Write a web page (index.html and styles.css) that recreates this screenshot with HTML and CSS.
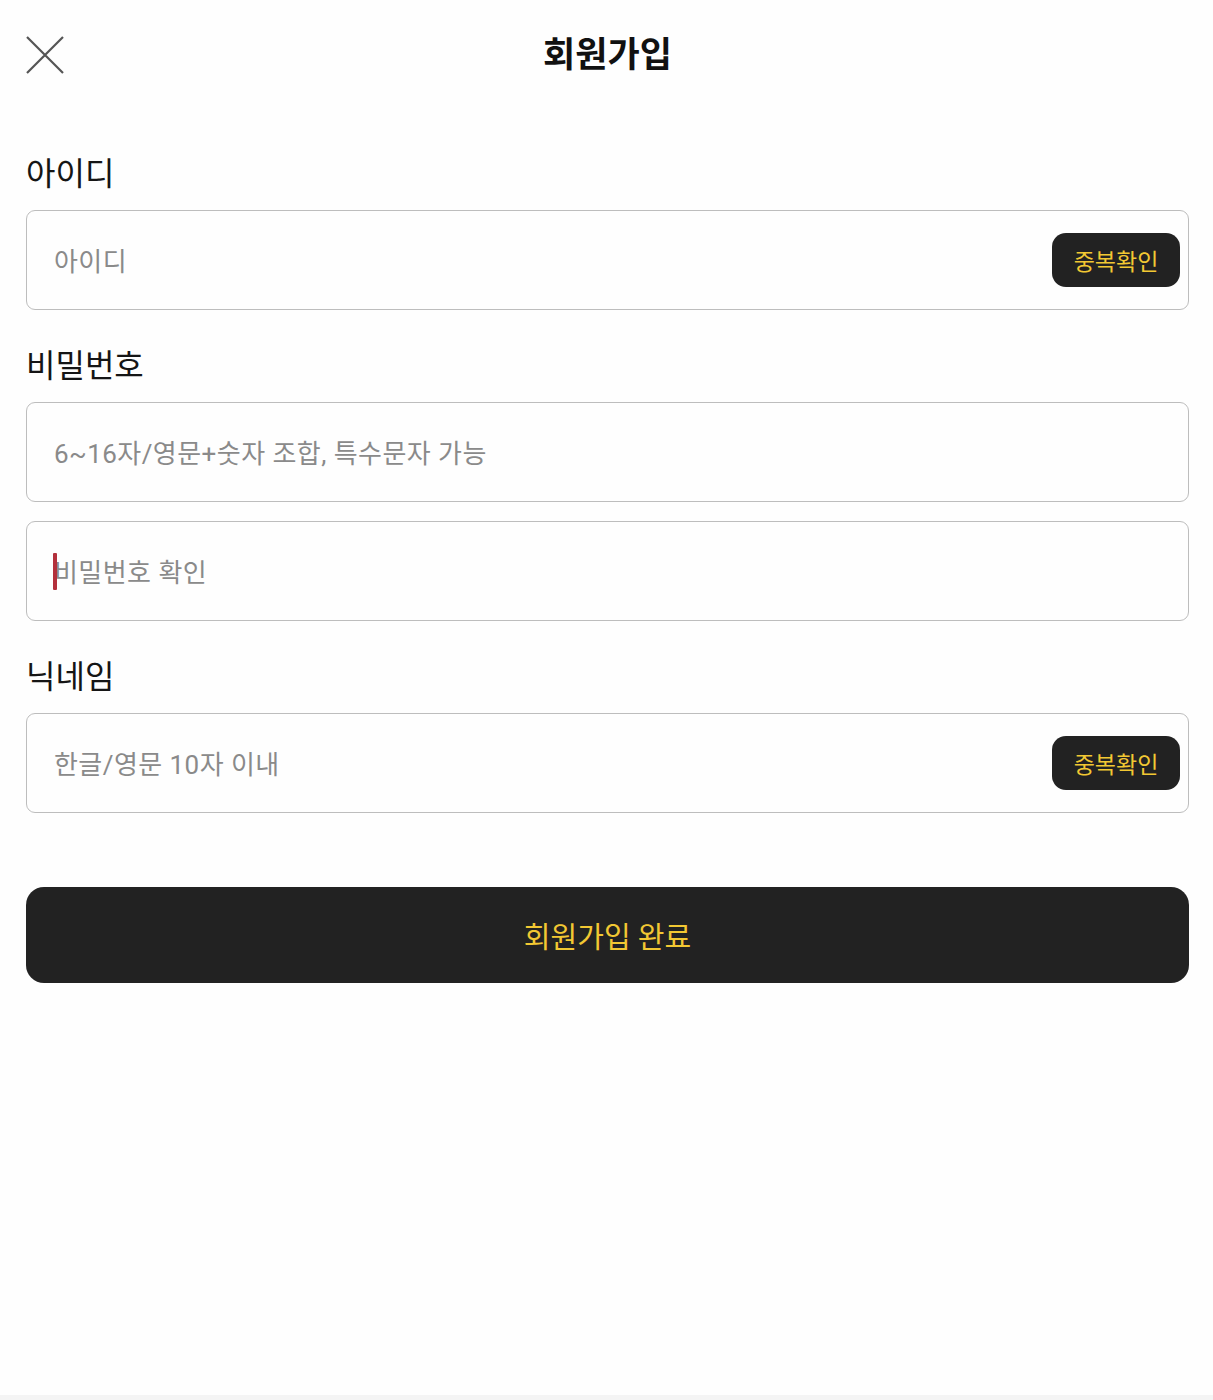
FILE: index.html
```html
<!DOCTYPE html>
<html lang="ko">
<head>
<meta charset="utf-8">
<title>회원가입</title>
<link rel="stylesheet" href="styles.css">
</head>
<body>
<div class="page">
  <header class="header">
    <button class="close" aria-label="닫기">
      <svg width="38" height="38" viewBox="0 0 38 38"><path d="M1 1 L37 37 M37 1 L1 37" stroke="#555" stroke-width="2.2" fill="none"/></svg>
    </button>
    <h1 class="title">회원가입</h1>
  </header>
  <form class="form">
    <label class="label">아이디</label>
    <div class="field">
      <input class="input" type="text" placeholder="아이디">
      <button type="button" class="check">중복확인</button>
    </div>

    <label class="label">비밀번호</label>
    <div class="field">
      <input class="input" type="password" placeholder="6~16자/영문+숫자 조합, 특수문자 가능">
    </div>
    <div class="field field-gap">
      <input class="input" type="password" placeholder="비밀번호 확인">
      <span class="caret"></span>
    </div>

    <label class="label">닉네임</label>
    <div class="field">
      <input class="input" type="text" placeholder="한글/영문 10자 이내">
      <button type="button" class="check">중복확인</button>
    </div>

    <button type="button" class="submit">회원가입 완료</button>
  </form>
</div>
</body>
</html>
```
FILE: styles.css
```css
html {
  background: #f4f4f4;
}
body {
  margin: 0;
  font-family: Roboto, "Noto Sans CJK KR", "Noto Sans", sans-serif;
  color: #111;
}
.page {
  background: #fefefe;
  min-height: 1395px;
  padding: 0 24px 0 26px;
  box-sizing: border-box;
}
.header {
  position: relative;
  height: 151px;
  display: flex;
  justify-content: center;
}
.close {
  position: absolute;
  left: 0;
  top: 36px;
  width: 38px;
  height: 38px;
  padding: 0;
  border: 0;
  background: none;
}
.close svg {
  display: block;
}
.title {
  margin: 30px 0 0;
  font-size: 35px;
  font-weight: 700;
  line-height: 52px;
  color: #111;
}
.form {
  display: flex;
  flex-direction: column;
}
.label {
  font-size: 32px;
  line-height: 44px;
  color: #151515;
  margin: 1px 0 14px 0;
}
.field {
  position: relative;
  height: 100px;
  box-sizing: border-box;
  border: 1.5px solid #bdbdbd;
  border-radius: 9px;
  display: flex;
  align-items: center;
  padding: 0 8px 0 27px;
  margin-bottom: 33px;
}
.field-gap {
  margin-top: -14px;
}
.input {
  flex: 1;
  border: 0;
  outline: none;
  background: transparent;
  font-family: inherit;
  font-size: 26px;
  letter-spacing: 0.45px;
  color: #333;
  padding: 4px 0 0;
  height: 44px;
  box-sizing: border-box;
}
.input::placeholder {
  color: #8a8a8a;
}
.caret {
  position: absolute;
  left: 26px;
  top: 31px;
  width: 4px;
  height: 37px;
  background: #b3303c;
  border-radius: 1px;
}
.check {
  width: 128px;
  height: 54px;
  border: 0;
  border-radius: 14px;
  background: #222222;
  color: #f2c833;
  font-family: inherit;
  font-size: 23px;
  padding: 0;
}
.submit {
  margin-top: 41px;
  height: 96px;
  border: 0;
  border-radius: 18px;
  background: #222222;
  color: #f2c833;
  font-family: inherit;
  font-size: 29px;
  padding: 0;
}
```
